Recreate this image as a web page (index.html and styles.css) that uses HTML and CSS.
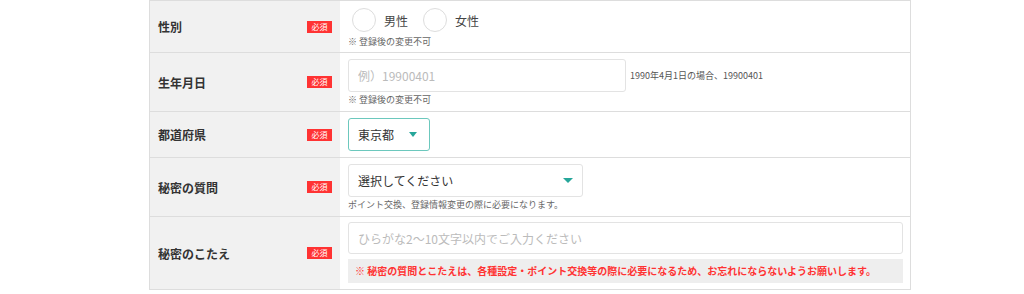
FILE: index.html
```html
<!DOCTYPE html>
<html>
<head>
    <meta name="viewport" content="width=device-width, initial-scale=1.0">
    <link rel="stylesheet" href="styles.css">
</head>
<body>
    <div class="form-table">
        <div class="row">
            <div class="label"><span>性別</span><span class="required">必須</span></div>
            <div class="field field-gender">
                <div class="radios">
                    <label class="radio"><span class="circle"></span>男性</label>
                    <label class="radio"><span class="circle"></span>女性</label>
                </div>
                <p class="note">※ 登録後の変更不可</p>
            </div>
        </div>
        <div class="row">
            <div class="label"><span>生年月日</span><span class="required">必須</span></div>
            <div class="field field-birth">
                <div class="inline">
                    <input type="text" class="text-input birth-input" placeholder="例）19900401">
                    <span class="hint">1990年4月1日の場合、19900401</span>
                </div>
                <p class="note">※ 登録後の変更不可</p>
            </div>
        </div>
        <div class="row">
            <div class="label"><span>都道府県</span><span class="required">必須</span></div>
            <div class="field field-pref">
                <div class="select select-pref"><span>東京都</span><span class="arrow"></span></div>
            </div>
        </div>
        <div class="row">
            <div class="label"><span>秘密の質問</span><span class="required">必須</span></div>
            <div class="field field-question">
                <div class="select select-question"><span>選択してください</span><span class="arrow"></span></div>
                <p class="note">ポイント交換、登録情報変更の際に必要になります。</p>
            </div>
        </div>
        <div class="row">
            <div class="label"><span>秘密のこたえ</span><span class="required">必須</span></div>
            <div class="field field-answer">
                <input type="text" class="text-input answer-input" placeholder="ひらがな2〜10文字以内でご入力ください">
                <p class="warning">※ 秘密の質問とこたえは、各種設定・ポイント交換等の際に必要になるため、お忘れにならないようお願いします。</p>
            </div>
        </div>
    </div>
</body>
</html>
```

FILE: styles.css
```css
body {
    margin: 0;
    padding: 0;
    background-color: #fff;
    font-family: "Noto Sans CJK JP", "Noto Sans", sans-serif;
    color: #333;
}

.form-table {
    width: 760px;
    margin-left: 149px;
    border: 1px solid #ddd;
    border-bottom: none;
}

.row {
    display: flex;
    border-bottom: 1px solid #ddd;
}

.label {
    width: 190px;
    flex-shrink: 0;
    background-color: #f1f1f1;
    display: flex;
    align-items: center;
    justify-content: space-between;
    padding: 0 8px 0 8px;
    box-sizing: border-box;
    font-size: 12px;
    font-weight: bold;
    color: #333;
}

.required {
    background-color: #ff3333;
    color: #fff;
    font-size: 8px;
    font-weight: normal;
    width: 25px;
    height: 12px;
    line-height: 12px;
    text-align: center;
}

.field {
    flex: 1;
    padding: 6px 7px 5px 8px;
}

.note {
    margin: 0;
    font-size: 9px;
    line-height: 12px;
    color: #666;
}

.radios {
    display: flex;
    gap: 15px;
    padding-left: 4px;
}

.radio {
    display: flex;
    align-items: center;
    font-size: 12px;
    color: #444;
}

.circle {
    width: 22px;
    height: 22px;
    border: 1px solid #ddd;
    border-radius: 50%;
    margin-right: 8px;
}

.field-gender {
    padding-top: 7px;
    padding-bottom: 4px;
}

.field-gender .note {
    margin-top: 4px;
}

.inline {
    display: flex;
    align-items: center;
}

.text-input {
    display: block;
    height: 33px;
    border: 1px solid #e3e3e3;
    border-radius: 3px;
    padding: 0 9px;
    box-sizing: border-box;
    font-family: inherit;
    font-size: 12px;
    color: #333;
    outline: none;
}

.text-input::placeholder {
    color: #bbb;
}

.birth-input {
    width: 278px;
}

.hint {
    font-size: 9px;
    color: #555;
    margin-left: 4px;
}

.field-birth .note {
    margin-top: 2px;
}

.select {
    display: flex;
    align-items: center;
    justify-content: space-between;
    height: 33px;
    border: 1px solid #e3e3e3;
    border-radius: 3px;
    padding: 0 9px;
    box-sizing: border-box;
    font-size: 12px;
    color: #333;
}

.select-pref {
    width: 82px;
    border-color: #6cc8bd;
    padding-right: 12px;
}

.select-pref .arrow {
    border-left-width: 4px;
    border-right-width: 4px;
}

.field-pref {
    padding-bottom: 6px;
}

.select-question {
    width: 235px;
}

.arrow {
    width: 0;
    height: 0;
    border-left: 5px solid transparent;
    border-right: 5px solid transparent;
    border-top: 5px solid #26a69a;
}

.field-question .note {
    margin-top: 2px;
}

.field-answer {
    padding-top: 5px;
    padding-bottom: 6px;
}

.answer-input {
    width: 100%;
    height: 32px;
}

.warning {
    margin: 5px 0 0;
    background-color: #eee;
    color: #ff3333;
    font-size: 10px;
    font-weight: bold;
    line-height: 24px;
    padding-left: 7px;
}
```
